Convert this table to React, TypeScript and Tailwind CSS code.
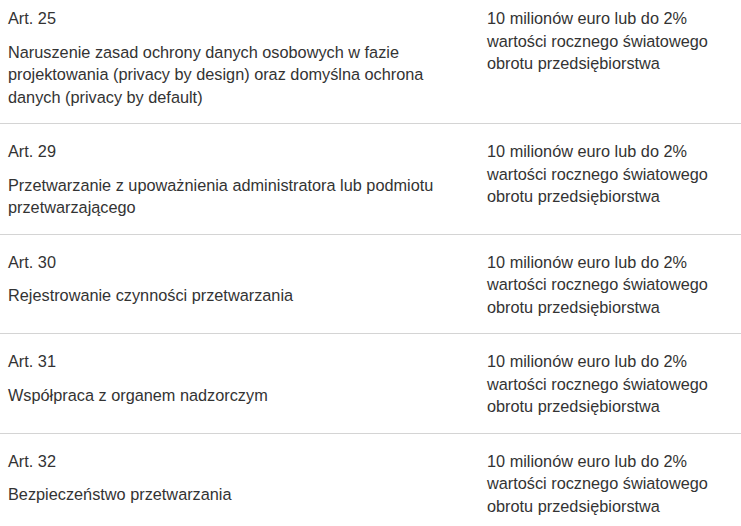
const rows = [
  {
    art: "Art. 25",
    desc: "Naruszenie zasad ochrony danych osobowych w fazie projektowania (privacy by design) oraz domyślna ochrona danych (privacy by default)",
  },
  {
    art: "Art. 29",
    desc: "Przetwarzanie z upoważnienia administratora lub podmiotu przetwarzającego",
  },
  { art: "Art. 30", desc: "Rejestrowanie czynności przetwarzania" },
  { art: "Art. 31", desc: "Współpraca z organem nadzorczym" },
  { art: "Art. 32", desc: "Bezpieczeństwo przetwarzania" },
];

const penalty =
  "10 milionów euro lub do 2% wartości rocznego światowego obrotu przedsiębiorstwa";

const App = () => {
  return (
    <div className="w-[741px] h-[526px] overflow-hidden bg-white font-['Liberation_Sans',Arial,sans-serif] text-[16.3px] leading-[22.5px] text-[#333]">
      {rows.map((row, i) => (
        <div
          key={row.art}
          className={`flex border-b border-[#d4d4d4] pb-[15px] ${
            i === 0 ? "pt-[7px]" : "pt-[16px]"
          }`}
        >
          <div className="w-[487px] shrink-0 pl-2 pr-[29px]">
            <p>{row.art}</p>
            <p className="mt-[11px]">{row.desc}</p>
          </div>
          <div className="flex-1 pr-2">
            <p>{penalty}</p>
          </div>
        </div>
      ))}
    </div>
  );
};

export default App;
